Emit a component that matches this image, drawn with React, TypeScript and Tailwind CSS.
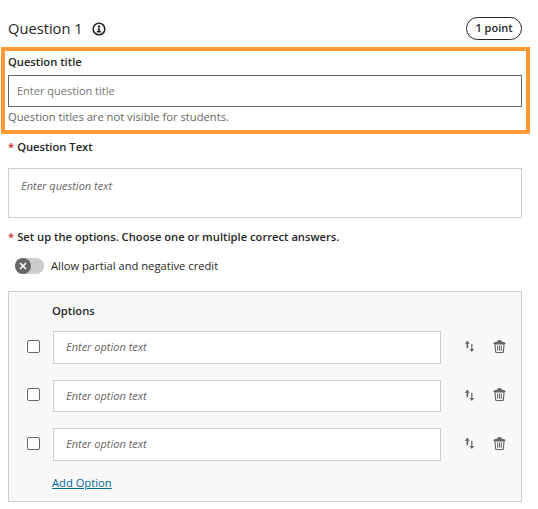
import { X } from "lucide-react";

function InfoIcon() {
  return (
    <svg width="14" height="14" viewBox="0 0 14 14" fill="none" className="text-[#262626]">
      <circle cx="7" cy="7" r="5.8" stroke="currentColor" strokeWidth="1.6" />
      <circle cx="7" cy="4.4" r="1.2" fill="currentColor" />
      <path d="M5.6 6.2H7.9V9H9.2V10.4H4.8V9H6.1V7.3H5.6Z" fill="currentColor" />
    </svg>
  );
}

function SwapIcon() {
  return (
    <svg width="11" height="12" viewBox="0 0 12 14" className="text-[#666666]" fill="currentColor">
      <path d="M3.4 0.6 L6.4 4.4 H4.5 V9.6 H2.5 V4.4 H0.6 Z" />
      <path d="M8 4.5 H9.4 V10.6 H11.4 L8.7 14 L6 10.6 H8 Z" />
    </svg>
  );
}

function TrashIcon() {
  return (
    <svg width="13" height="13" viewBox="0 0 14 14" fill="none" className="text-[#666666]">
      <path d="M0.6 3 C2 2.4 3.4 2.1 4.6 2 V1.2 C4.6 0.7 5 0.4 5.5 0.4 H8.5 C9 0.4 9.4 0.7 9.4 1.2 V2 C10.6 2.1 12 2.4 13.4 3 V4.2 H0.6 Z" fill="currentColor" />
      <path d="M2.1 4.2 H11.9 L11.2 12.6 C11.1 13.2 10.8 13.5 10.2 13.5 H3.8 C3.2 13.5 2.9 13.2 2.8 12.6 Z" stroke="currentColor" strokeWidth="1.2" fill="#f8f8f8" />
      <path d="M5 5.8 V11.6 M7 5.8 V11.6 M9 5.8 V11.6" stroke="currentColor" strokeWidth="1.1" />
    </svg>
  );
}

function OptionRow() {
  return (
    <div className="flex items-center h-[32.5px]">
      <span className="ml-[18px] -mt-[2px] w-[13px] h-[13px] border border-[#666666] rounded-[2px] bg-white shrink-0" />
      <div className="ml-[13px] w-[388px] h-full border border-[#cdcdcd] bg-white flex items-center pl-[12px] text-[11px] italic text-[#666666]">
        Enter option text
      </div>
      <div className="ml-[22px] -mt-[2px] w-[12px] flex justify-center"><SwapIcon /></div>
      <div className="ml-[18px] -mt-[2px]"><TrashIcon /></div>
    </div>
  );
}

export default function App() {
  return (
    <div className="w-[538px] h-[509px] overflow-hidden bg-white pl-[8px] pr-[16px] text-[#262626] font-['Open_Sans',sans-serif]">
      <div className="flex justify-between pt-[17px] h-[47px] items-start">
        <div className="flex items-center h-[23px]">
          <h2 className="text-[14.7px] font-medium leading-none">Question 1</h2>
          <span className="ml-[9px]"><InfoIcon /></span>
        </div>
        <span className="w-[56px] h-[23px] rounded-full border border-[#262626] flex items-center justify-center text-[11px] font-semibold">
          1 point
        </span>
      </div>

      <div className="-ml-[7px] -mr-[8px] h-[87px] border-[4px] border-[#ff9933] pl-[3px] pr-[4px]">
        <div className="text-[11.2px] font-semibold leading-none pt-[5px] h-[24px]">Question title</div>
        <div className="h-[32px] border border-[#666666] flex items-center pl-[8px] text-[11px] text-[#767676]">
          Enter question title
        </div>
        <p className="text-[11.2px] text-[#666666] leading-none mt-[4px]">Question titles are not visible for students.</p>
      </div>

      <div className="mt-[6px] h-[14px] flex items-center text-[11.2px] font-semibold">
        <span className="text-[#c62828] mr-[3px]">*</span>Question Text
      </div>
      <div className="mt-[14px] h-[50px] border border-[#cdcdcd] pl-[12px] pt-[9px] text-[11px] italic text-[#666666] leading-[15px]">
        Enter question text
      </div>

      <div className="mt-[12px] h-[14px] flex items-center text-[11.2px] font-semibold">
        <span className="text-[#c62828] mr-[3px]">*</span>Set up the options. Choose one or multiple correct answers.
      </div>

      <div className="mt-[14px] h-[16px] flex items-center pl-[7px]">
        <div className="w-[29px] h-[16px] rounded-full bg-[#cdcdcd] relative">
          <span className="absolute left-0 top-0 w-[16px] h-[16px] rounded-full bg-[#666666] flex items-center justify-center">
            <X size={10} strokeWidth={4} className="text-white" />
          </span>
        </div>
        <span className="ml-[7px] text-[11.2px] text-[#262626]">Allow partial and negative credit</span>
      </div>

      <div className="mt-[17px] h-[211px] border border-[#cdcdcd] bg-[#f8f8f8]">
        <div className="pl-[43px] pt-[11px] h-[39px] text-[11.2px] font-semibold leading-[15px]">Options</div>
        <div className="flex flex-col gap-[16px]">
          <OptionRow />
          <OptionRow />
          <OptionRow />
        </div>
        <a className="block ml-[43px] mt-[14.5px] text-[11.2px] leading-[15px] text-[#006b99] underline">Add Option</a>
      </div>
    </div>
  );
}
